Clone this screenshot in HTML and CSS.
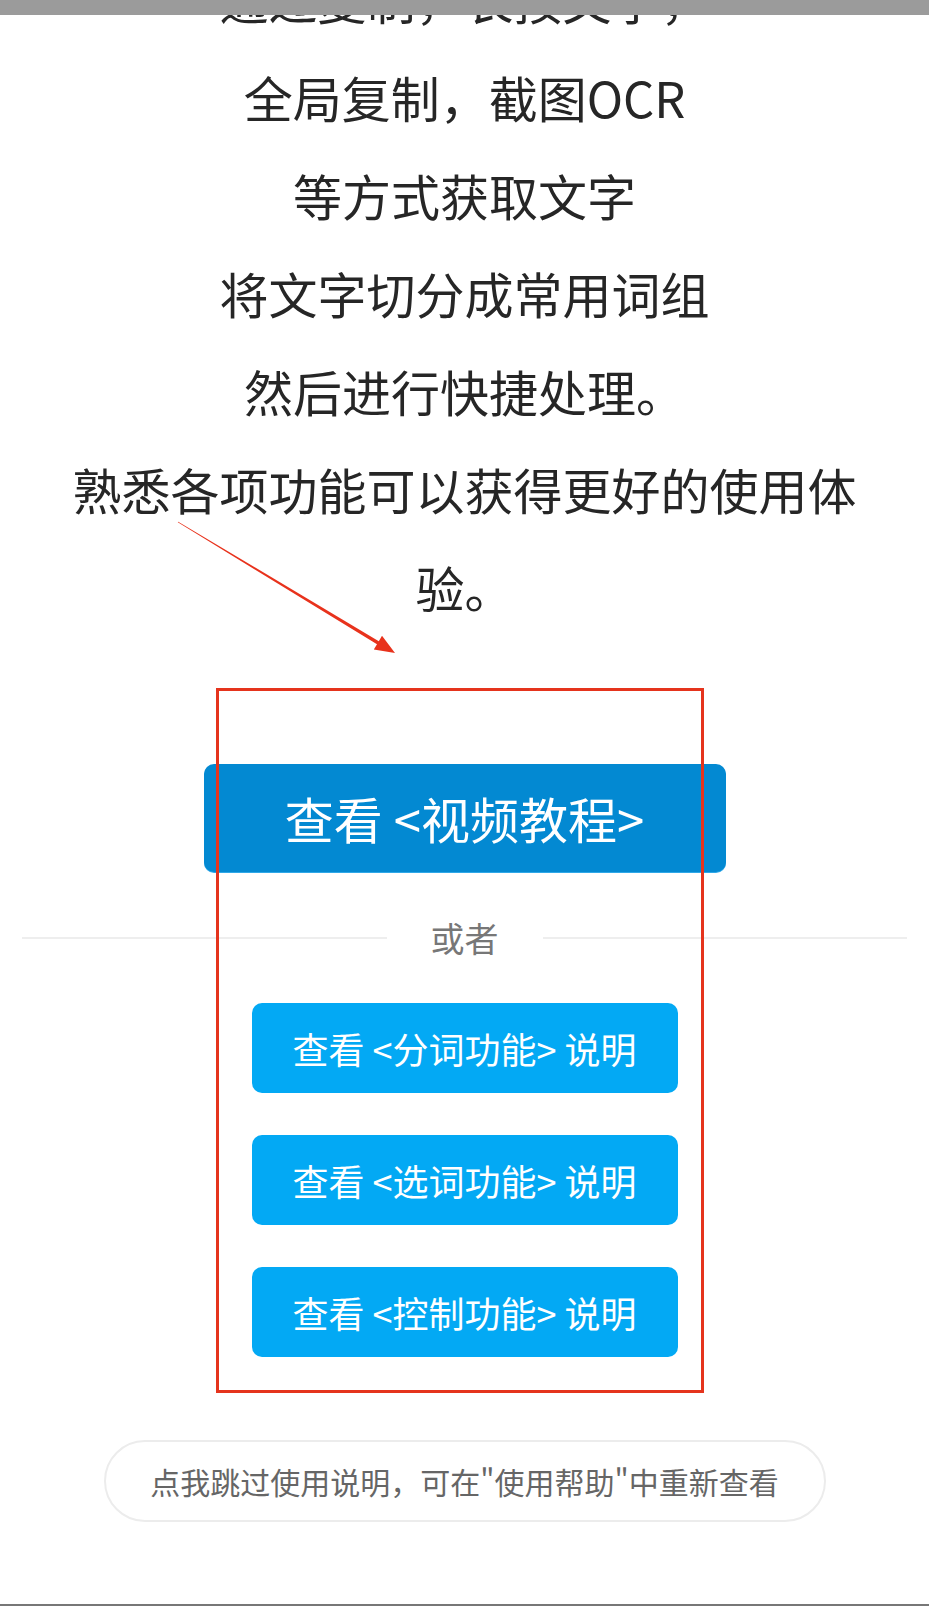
FILE: index.html
```html
<!DOCTYPE html>
<html lang="zh-CN">
<head>
<meta charset="utf-8">
<title>使用说明</title>
<link rel="stylesheet" href="styles.css">
</head>
<body>
<div class="page">
  <div class="intro">通过复制，长按文字，<br>全局复制，截图OCR<br>等方式获取文字<br>将文字切分成常用词组<br>然后进行快捷处理。<br>熟悉各项功能可以获得更好的使用体验。</div>

  <div class="actions">
    <button class="btn-video">查看 &lt;视频教程&gt;</button>
    <div class="divider">
      <span class="divider-line"></span>
      <span class="divider-text">或者</span>
      <span class="divider-line"></span>
    </div>
    <div class="guide-list">
      <button class="btn-guide">查看 &lt;分词功能&gt; 说明</button>
      <button class="btn-guide">查看 &lt;选词功能&gt; 说明</button>
      <button class="btn-guide">查看 &lt;控制功能&gt; 说明</button>
    </div>
  </div>

  <button class="btn-skip">点我跳过使用说明，可在"使用帮助"中重新查看</button>

  <div class="status-bar"></div>
  <div class="nav-edge"></div>

  <svg class="annotation" width="929" height="1606" viewBox="0 0 929 1606" aria-hidden="true">
    <polygon class="anno-arrow" points="177.8,522.3 377.0,644.2 373.8,649.5 395,653 382.0,635.8 378.8,641.2 178.2,521.7"/>
    <rect class="anno-box" x="217.5" y="689.5" width="485" height="702"/>
  </svg>
</div>
</body>
</html>
```

FILE: styles.css
```css
html, body {
  margin: 0;
  padding: 0;
  background: #ffffff;
}

body {
  font-family: "Noto Sans CJK SC", "Noto Sans", sans-serif;
}

.page {
  position: relative;
  width: 929px;
  height: 1606px;
  overflow: hidden;
  background: #ffffff;
}

.intro {
  width: 810px;
  margin: -50px auto 0;
  text-align: center;
  font-size: 49px;
  line-height: 98px;
  color: #262626;
}

.actions {
  display: flex;
  flex-direction: column;
  align-items: center;
  margin-top: 128px;
}

button {
  font-family: inherit;
  border: 0;
  padding: 0;
  margin: 0;
  cursor: pointer;
}

.btn-video {
  width: 522px;
  height: 108px;
  border-radius: 10px;
  background: #0389d2;
  color: #ffffff;
  font-size: 49px;
  line-height: 108px;
  box-shadow: 0 1px 0 #2fa8e8;
}

.divider {
  align-self: stretch;
  display: flex;
  align-items: center;
  padding: 0 22px;
  margin-top: 41px;
  height: 50px;
}

.divider-line {
  flex: 1;
  height: 2px;
  background: #eeeeee;
}

.divider-text {
  margin: 0 44px;
  font-size: 34px;
  line-height: 50px;
  color: #777777;
}

.guide-list {
  display: flex;
  flex-direction: column;
  gap: 42px;
  margin-top: 40px;
}

.btn-guide {
  width: 426px;
  height: 90px;
  border-radius: 10px;
  background: #03a9f4;
  color: #ffffff;
  font-size: 36px;
  line-height: 90px;
}

.btn-skip {
  display: block;
  width: 722px;
  height: 82px;
  margin: 83px auto 0;
  box-sizing: border-box;
  border: 2px solid #ececec;
  border-radius: 41px;
  background: #ffffff;
  color: #666666;
  font-size: 30px;
  line-height: 78px;
}

.status-bar {
  position: absolute;
  left: 0;
  top: 0;
  width: 100%;
  height: 15px;
  background: #9b9b9b;
}

.nav-edge {
  position: absolute;
  left: 0;
  bottom: 0;
  width: 100%;
  height: 2px;
  background: #777777;
}

.annotation {
  position: absolute;
  left: 0;
  top: 0;
  pointer-events: none;
}

.anno-arrow {
  fill: #e8321c;
}

.anno-box {
  fill: none;
  stroke: #e5341d;
  stroke-width: 3;
}
```
